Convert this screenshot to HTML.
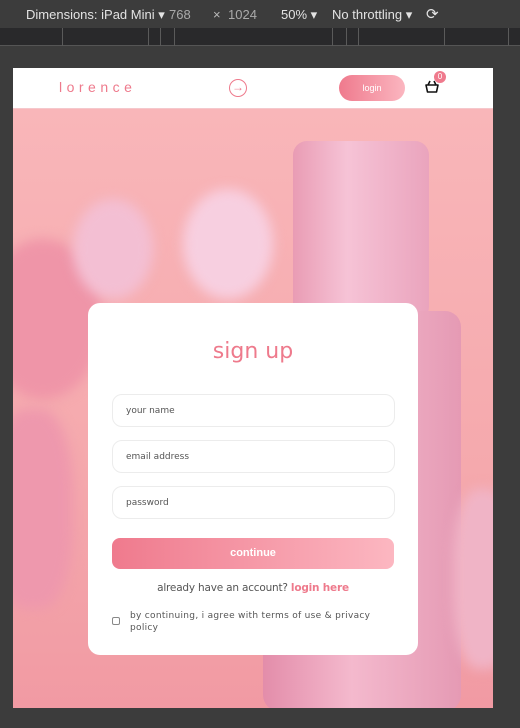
<!DOCTYPE html>
<html><head><meta charset="utf-8"><style>
*{margin:0;padding:0;box-sizing:border-box}
body{width:520px;height:728px;background:#3c3c3c;position:relative;overflow:hidden;font-family:"Liberation Sans","DejaVu Sans",sans-serif}
.tb{position:absolute;left:0;top:0;width:520px;height:28px;background:#3c3c3c;color:#e3e3e3;font-size:13px}
.tb span{position:absolute;top:7px}
.ruler{position:absolute;left:0;top:28px;width:520px;height:18px;background:#29292b;border-bottom:1px solid #555}
.ruler i{position:absolute;top:0;width:1px;height:18px;background:#5a5a5a}
.page{position:absolute;left:13px;top:68px;width:480px;height:640px;overflow:hidden;background:#f6aab0}
.hdr{position:absolute;left:0;top:0;width:480px;height:41px;background:#fff;border-bottom:1px solid #f5c8cc}
.bg{position:absolute;left:0;top:41px;width:480px;height:599px;background:linear-gradient(180deg,#f9b6b9 0%,#f5a9ad 60%,#f19aa3 100%)}
.card{position:absolute;left:75px;top:235px;width:330px;height:352px;background:#fff;border-radius:12px}
.in{position:absolute;left:24px;width:283px;height:33px;border:1px solid #ececec;border-radius:10px;font-size:9px;color:#555;padding:11px 0 0 13px;font-family:"DejaVu Sans",sans-serif}
</style></head><body>
<div class="tb"><span style="left:26px">Dimensions: iPad Mini ▾</span><span style="left:169px;color:#aaa">768</span><span style="left:213px;color:#bbb">×</span><span style="left:228px;color:#aaa">1024</span><span style="left:281px">50% ▾</span><span style="left:332px">No throttling ▾</span><span style="left:426px;font-size:15px;top:5px">⟳</span></div>
<div class="ruler"><i style="left:62px"></i><i style="left:148px"></i><i style="left:160px"></i><i style="left:174px"></i><i style="left:332px"></i><i style="left:346px"></i><i style="left:358px"></i><i style="left:444px"></i><i style="left:508px"></i></div>
<div class="page">
<div class="bg">
<div style="position:absolute;left:280px;top:32px;width:136px;height:180px;border-radius:14px;background:linear-gradient(90deg,#e99cb4,#f6c3d6 40%,#eaa4bd)"></div>
<div style="position:absolute;left:250px;top:202px;width:198px;height:400px;border-radius:16px;background:linear-gradient(90deg,#e38daa,#f4b9cd 45%,#e59ab4)"></div>
<div style="position:absolute;left:-30px;top:130px;width:120px;height:160px;border-radius:50%;background:#ef95a8;filter:blur(6px)"></div>
<div style="position:absolute;left:170px;top:80px;width:90px;height:110px;border-radius:50%;background:#f7cfe0;filter:blur(6px)"></div>
<div style="position:absolute;left:60px;top:90px;width:80px;height:100px;border-radius:50%;background:#f3bfd3;filter:blur(6px)"></div>
<div style="position:absolute;left:-20px;top:300px;width:80px;height:200px;border-radius:40%;background:#ee98ad;filter:blur(6px)"></div>
<div style="position:absolute;left:440px;top:380px;width:60px;height:180px;border-radius:40%;background:#f0b4c6;filter:blur(6px)"></div>
</div>
<div class="hdr">
<div style="position:absolute;left:46px;top:11px;font-size:14px;letter-spacing:4.5px;color:#ee7a8c">lorence</div>
<div style="position:absolute;left:216px;top:11px;width:18px;height:18px;border:1.5px solid #ee7a8c;border-radius:50%;color:#ee7a8c;font-size:12px;line-height:15px;text-align:center">→</div>
<div style="position:absolute;left:326px;top:7px;width:66px;height:26px;border-radius:13px;background:linear-gradient(90deg,#ef7a8d,#fbb6c0);color:#fff;font-size:9px;text-align:center;line-height:26px">login</div>
<svg style="position:absolute;left:411px;top:11px" width="16" height="16" viewBox="0 0 16 16"><path d="M2 6h12l-1.5 7h-9z M4 6l2-4 M12 6l-2-4" fill="none" stroke="#111" stroke-width="1.6" stroke-linejoin="round"/></svg>
<div style="position:absolute;left:421px;top:3px;width:12px;height:12px;border-radius:50%;background:#ef7a8d;color:#fff;font-size:8px;text-align:center;line-height:12px">0</div>
</div>
<div class="card">
<div style="position:absolute;left:0;width:330px;top:36px;text-align:center;font-size:22px;color:#ee7a8c;font-family:'DejaVu Sans',sans-serif">sign up</div>
<div class="in" style="top:91px">your name</div>
<div class="in" style="top:137px">email address</div>
<div class="in" style="top:183px">password</div>
<div style="position:absolute;left:24px;top:235px;width:282px;height:31px;border-radius:8px;background:linear-gradient(90deg,#ef7a8d,#fcb7c1);color:#fff;font-size:11px;font-weight:bold;text-align:center;line-height:31px">continue</div>
<div style="position:absolute;left:0;width:330px;top:279px;text-align:center;font-size:10.5px;color:#555;font-family:'DejaVu Sans',sans-serif;letter-spacing:-0.2px">already have an account? <span style="color:#ee7a8c;font-weight:bold">login here</span></div>
<div style="position:absolute;left:24px;top:314px;width:8px;height:8px;border:1px solid #888;border-radius:2px"></div>
<div style="position:absolute;left:42px;top:307px;width:260px;font-size:9px;color:#555;line-height:12px;letter-spacing:.3px;font-family:'DejaVu Sans',sans-serif">by continuing, i agree with terms of use &amp; privacy policy</div>
</div>
</div>
</body></html>
